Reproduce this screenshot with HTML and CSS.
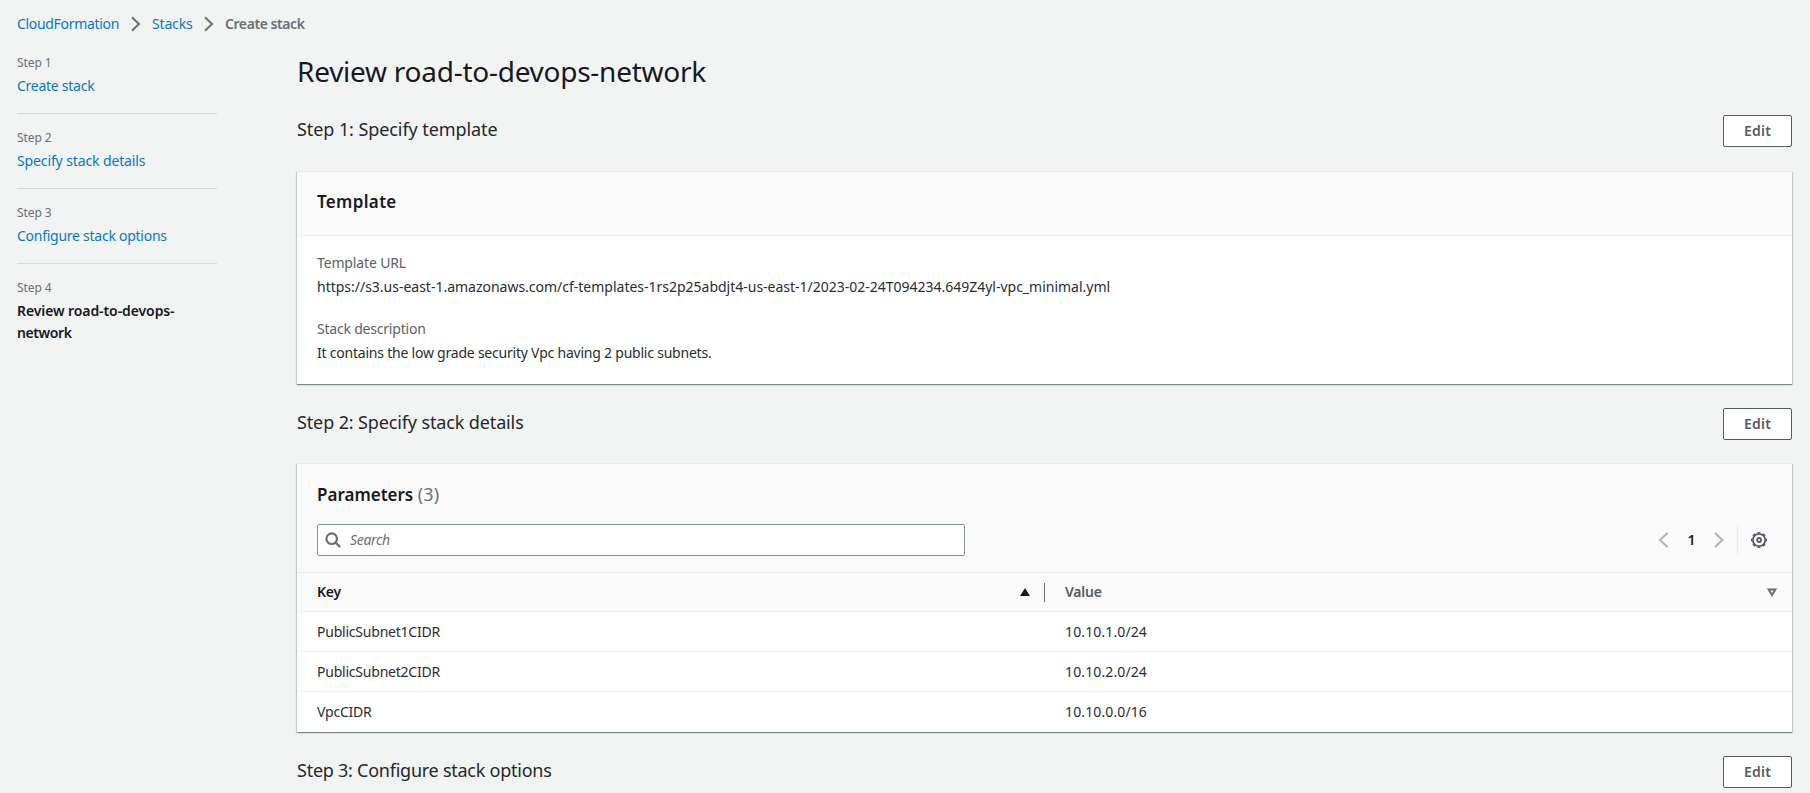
FILE: index.html
```
<!DOCTYPE html>
<html lang="en">
<head>
<meta charset="utf-8">
<title>CloudFormation - Create stack</title>
<link rel="stylesheet" href="styles.css">
</head>
<body>
<nav class="breadcrumb">
  <a class="crumb crumb-service" href="#">CloudFormation</a>
  <svg class="crumb-sep" width="16" height="16" viewBox="0 0 16 16"><path d="M4 1.200 11 8l-7 6.800"/></svg>
  <a class="crumb crumb-stacks" href="#">Stacks</a>
  <svg class="crumb-sep" width="16" height="16" viewBox="0 0 16 16"><path d="M4 1.200 11 8l-7 6.800"/></svg>
  <span class="crumb-current">Create stack</span>
</nav>
<div class="layout">
  <aside class="steps">
    <div class="step"><div class="step-no">Step 1</div><a class="step-link tight" href="#">Create stack</a></div>
    <div class="step"><div class="step-no">Step 2</div><a class="step-link snug" href="#">Specify stack details</a></div>
    <div class="step"><div class="step-no">Step 3</div><a class="step-link tight" href="#">Configure stack options</a></div>
    <div class="step"><div class="step-no">Step 4</div><div class="step-active">Review road-to-devops-<br><span class="step-active-end">network</span></div></div>
  </aside>
  <main class="main">
    <h1 class="title">Review road-to-devops-network</h1>

    <div class="section-head"><h2 class="section-title title-template">Step 1: Specify template</h2><button class="edit">Edit</button></div>
    <section class="card">
      <header class="card-head"><h3 class="card-title card-title-template">Template</h3></header>
      <dl class="details">
        <dt class="label snug">Template URL</dt>
        <dd class="value value-url">https://s3.us-east-1.amazonaws.com/cf-templates-1rs2p25abdjt4-us-east-1/2023-02-24T094234.649Z4yl-vpc_minimal.yml</dd>
        <dt class="label">Stack description</dt>
        <dd class="value">It contains the low grade security Vpc having 2 public subnets.</dd>
      </dl>
    </section>

    <div class="section-head section-head-details"><h2 class="section-title title-details">Step 2: Specify stack details</h2><button class="edit">Edit</button></div>
    <section class="card">
      <header class="card-head card-head-tools">
        <h3 class="card-title">Parameters <span class="count">(3)</span></h3>
        <div class="tools">
          <div class="search">
            <svg class="search-icon" width="16" height="16" viewBox="0 0 16 16"><circle cx="6.700" cy="6.700" r="5.300"/><path d="m10.600 10.600 4.600 4.400"/></svg>
            <span class="search-hint">Search</span>
          </div>
          <div class="pager">
            <svg class="page-arrow" width="16" height="16" viewBox="0 0 16 16"><path d="M11.500 1 4 8l7.500 7"/></svg>
            <span class="page-no">1</span>
            <svg class="page-arrow" width="16" height="16" viewBox="0 0 16 16"><path d="M4 1 11.500 8 4 15"/></svg>
            <span class="pager-rule"></span>
            <svg class="gear" width="16" height="16" viewBox="0 0 16 16"><circle class="gear-ring" cx="8" cy="8" r="6.200"/><circle class="gear-teeth" cx="8" cy="8" r="7.300" pathLength="80"/><circle class="gear-hub" cx="8" cy="8" r="2"/></svg>
          </div>
        </div>
      </header>
      <div class="table">
        <div class="tr th">
          <div class="cell cell-key">Key<svg class="sort" width="10" height="9" viewBox="0 0 10 9"><path class="sort-on" d="M5 0l5 8H0z"/></svg></div>
          <div class="cell cell-value">Value<svg class="sort" width="10" height="9" viewBox="0 0 10 9"><path class="sort-off" d="M1.600 1.500h6.800L5 7z"/></svg></div>
        </div>
        <div class="tr"><div class="cell">PublicSubnet1CIDR</div><div class="cell num">10.10.1.0/24</div></div>
        <div class="tr"><div class="cell">PublicSubnet2CIDR</div><div class="cell num">10.10.2.0/24</div></div>
        <div class="tr"><div class="cell">VpcCIDR</div><div class="cell num">10.10.0.0/16</div></div>
      </div>
    </section>

    <div class="section-head"><h2 class="section-title title-options">Step 3: Configure stack options</h2><button class="edit">Edit</button></div>
  </main>
</div>
</body>
</html>
```
FILE: styles.css
```
* { box-sizing: border-box; }
html, body { height: 100%; }
body {
  margin: 0;
  overflow: hidden;
  background: #f2f3f3;
  color: #16191f;
  font: 14px/22px "Noto Sans", "Open Sans", sans-serif;
}
h1, h2, h3, dl, dd { margin: 0; }
a { color: #0879c0; text-decoration: none; }

/* breadcrumb */
.breadcrumb { display: flex; align-items: center; height: 54px; padding: 13px 17px 19px; }
.crumb-service { letter-spacing: -0.32px; width: 102px; white-space: nowrap; }
.crumb-stacks { letter-spacing: -0.17px; width: 40px; }
.crumb-sep { margin: 0 8px 0 9px; flex: none; }
.crumb-sep path { fill: none; stroke: #687078; stroke-width: 2; }
.crumb-current { color: #687078; font-weight: 600; letter-spacing: -0.43px; }

.layout { display: flex; }

/* wizard steps */
.steps { width: 200px; margin: 0 80px 0 17px; flex: none; }
.step { padding-bottom: 16px; margin-bottom: 15px; border-bottom: 1px solid #d5dbdb; }
.step:last-child { border: 0; }
.step-no { font-size: 12px; line-height: 18px; margin-bottom: 3px; color: #687078; letter-spacing: -0.1px; }
.step-link { display: block; white-space: nowrap; }
.tight { letter-spacing: -0.26px; }
.snug { letter-spacing: -0.12px; }
.step-active { font-weight: 600; letter-spacing: -0.09px; }
.step-active-end { letter-spacing: -0.41px; }

/* main column */
.main { width: 1495px; margin-top: -3px; }
.title { font-size: 28px; font-weight: 400; line-height: 40px; letter-spacing: -0.26px; }
.section-head { display: flex; justify-content: space-between; align-items: flex-start; height: 32px; margin: 24px 0; }
.section-head-details { margin-bottom: 23px; }
.section-title { color: #24272d; font-size: 18px; font-weight: 400; line-height: 28px; }
.title-template { letter-spacing: -0.08px; }
.title-details { letter-spacing: -0.13px; }
.title-options { letter-spacing: -0.25px; }
.edit {
  width: 69px; height: 32px; padding: 0;
  background: #fff; border: 1px solid #545b64; border-radius: 2px;
  color: #545b64; font: 600 14px/20px "Noto Sans", sans-serif; letter-spacing: 0.25px;
}

/* cards */
.card {
  background: #fff;
  border-top: 1px solid #eaeded;
  box-shadow: 0 1px 1px 0 rgba(0, 28, 36, .3), 1px 1px 1px 0 rgba(0, 28, 36, .15), -1px 1px 1px 0 rgba(0, 28, 36, .15);
}
.card-head { height: 64px; padding: 17px 20px 16px; background: #fafafa; border-bottom: 1px solid #eaeded; }
.card-head-tools { height: 109px; }
.card-title { height: 26px; font-size: 17px; font-weight: 600; line-height: 26px; white-space: pre; }
.card-title-template { letter-spacing: 0.33px; }
.count { font-size: 18px; font-weight: 400; color: #687078; letter-spacing: 0.2px; }
.details { padding: 16px 20px 20px; }
.label { color: #5b626b; letter-spacing: -0.21px; }
.label.snug { letter-spacing: -0.14px; }
.value { margin-top: 2px; color: #2a2d33; letter-spacing: -0.22px; }
.value + .label { margin-top: 20px; }
.value-url { letter-spacing: -0.01px; }

/* parameter tools */
.tools { display: flex; justify-content: space-between; margin-top: 17px; height: 32px; }
.search {
  display: flex; align-items: center; gap: 9px;
  width: 648px; padding: 0 7px;
  background: #fff; border: 1px solid #879596; border-radius: 2px;
}
.search-icon { fill: none; stroke: #687078; stroke-width: 2.2; }
.search-hint { color: #687078; font-style: italic; letter-spacing: -0.34px; }
.pager { display: flex; align-items: center; margin-right: 5px; }
.page-arrow { fill: none; stroke: #aab7b8; stroke-width: 2; }
.page-no { width: 39px; text-align: center; font-weight: 600; }
.pager-rule { width: 1px; height: 32px; background: #eaeded; margin: 0 13px 0 10px; }
.gear { fill: none; stroke: #545b64; }
.gear-ring { stroke-width: 1.7; }
.gear-teeth { stroke-width: 1.4; stroke-dasharray: 5 5; stroke-dashoffset: 2.5; }
.gear-hub { stroke-width: 1.8; }

/* parameter table */
.tr { display: grid; grid-template-columns: 748px 747px; height: 40px; border-bottom: 1px solid #eaeded; align-items: center; color: #2a2d33; }
.tr:last-child { border: 0; }
.cell { padding: 0 20px; letter-spacing: -0.22px; }
.num { letter-spacing: 0.12px; }
.th { height: 39px; background: #fafafa; color: #16191f; font-weight: 600; }
.th .cell { display: flex; align-items: center; justify-content: space-between; height: 19px; }
.th .cell-key { padding-right: 14px; border-right: 1px solid #687078; }
.th .cell-value { padding-right: 15px; color: #545b64; }
.sort { flex: none; }
.sort-on { fill: #16191f; }
.sort-off { fill: none; stroke: #687078; stroke-width: 2; }
```
